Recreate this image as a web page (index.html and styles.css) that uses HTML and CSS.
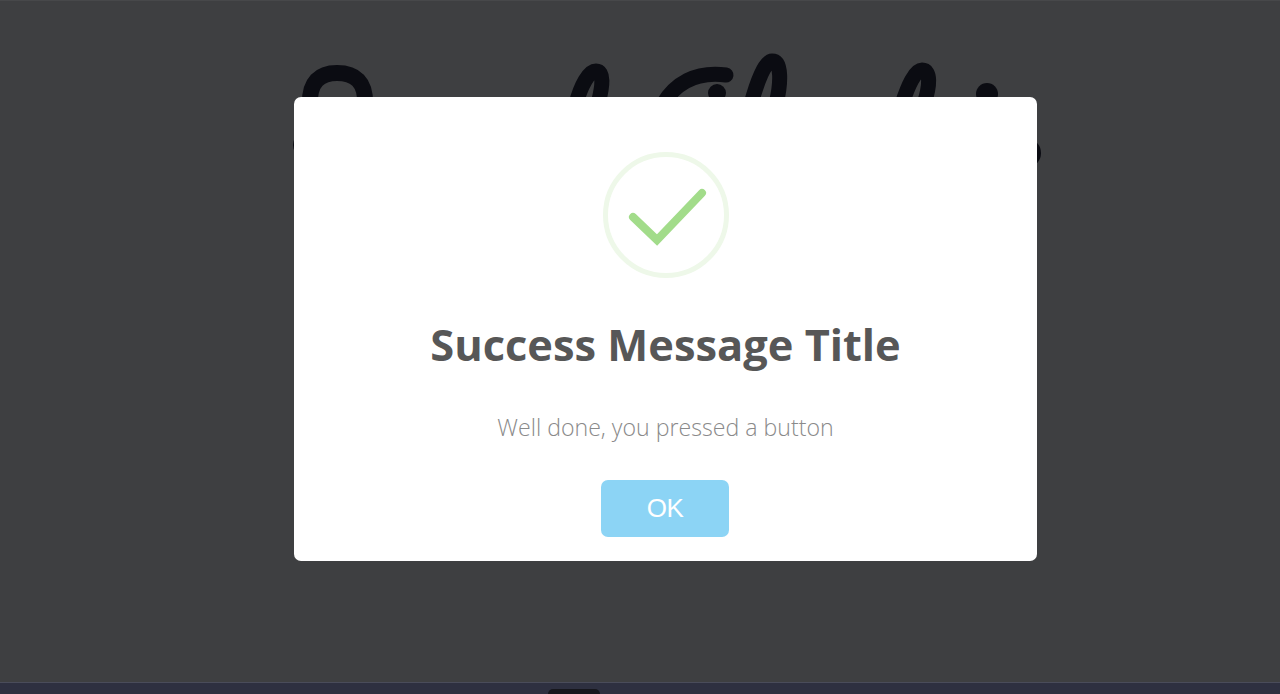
FILE: index.html
```html
<!DOCTYPE html>
<html lang="en">
<head>
<meta charset="utf-8">
<title>Success Message</title>
<link rel="stylesheet" href="styles.css">
</head>
<body>
<main class="stage">
  <!-- Illegible remnants of the page behind the dialog: abstract strokes only -->
  <svg class="backdrop-art" width="1280" height="200" viewBox="0 0 1280 200" aria-hidden="true">
    <g fill="none" stroke="#0b0c12" stroke-linecap="round">
      <path stroke-width="16" d="M310 104C309 82 320 73 337 73C355 73 366 82 365 104"/>
      <path stroke-width="15" d="M576 104C581 85 589 71 596 71C604 71 603 85 598 104"/>
      <path stroke-width="15" d="M663 104C675 84 695 71 726 75"/>
      <path stroke-width="15" d="M751 104C757 82 765 61 772 61C782 61 781 84 776 104"/>
      <path stroke-width="15" d="M902 104C908 86 915 70 922 70C931 70 930 86 924 104"/>
    </g>
    <g fill="#0b0c12">
      <circle cx="717" cy="93" r="9"/>
      <circle cx="987" cy="94" r="11"/>
      <ellipse cx="302" cy="145" rx="9" ry="11"/>
      <ellipse cx="1030" cy="153" rx="11" ry="13"/>
    </g>
  </svg>
  <section class="dialog" role="dialog">
    <svg class="success-icon" width="126" height="126" viewBox="0 0 126 126" aria-hidden="true">
      <circle class="success-ring" cx="63" cy="63" r="60.5"/>
      <path class="success-check" d="M30 65L54 88L99 41"/>
    </svg>
    <h1 class="dialog-title">Success Message Title</h1>
    <p class="dialog-text">Well done, you pressed a button</p>
    <button class="dialog-ok" type="button">OK</button>
  </section>
</main>
<footer class="dock">
  <div class="dock-tab"></div>
</footer>
</body>
</html>
```
FILE: styles.css
```css
* { box-sizing: border-box; }

html, body { height: 100%; }

body {
  margin: 0;
  overflow: hidden;
  display: flex;
  flex-direction: column;
  background: #3e3f41;
  font-family: "Open Sans", sans-serif;
}

.stage {
  position: relative;
  flex: 1;
  display: flex;
  align-items: flex-start;
  padding: 97px 0 0 294px;
  border-top: 1px solid #47484a;
}

.backdrop-art {
  position: absolute;
  left: 0;
  top: -1px;
}

.dialog {
  position: relative;
  width: 743px;
  height: 464px;
  margin-top: -1px;
  padding-top: 55px;
  display: flex;
  flex-direction: column;
  align-items: center;
  background: #fff;
  border-radius: 7px;
}

.success-icon { display: block; flex: none; }

.success-ring {
  fill: none;
  stroke: #eef8e9;
  stroke-width: 5;
}

.success-check {
  fill: none;
  stroke: #a2dc8a;
  stroke-width: 8;
  stroke-linecap: round;
  stroke-linejoin: miter;
}

.dialog-title {
  margin: 35px 0 0;
  font-size: 43.4px;
  line-height: 64px;
  font-weight: 700;
  color: #575757;
}

.dialog-text {
  margin: 34px 0 0;
  font-size: 23.15px;
  line-height: 32px;
  font-weight: 300;
  color: #8a8a8a;
}

.dialog-ok {
  margin: 37px 1px 0 0;
  width: 128px;
  height: 57px;
  padding: 0;
  border: 0;
  border-radius: 7px;
  background: #8cd4f5;
  color: #fff;
  font-family: "Liberation Sans", Arial, sans-serif;
  font-size: 26px;
  letter-spacing: -0.5px;
}

.dock {
  flex: none;
  height: 12px;
  display: flex;
  align-items: flex-end;
  padding-left: 548px;
  background: #2e3040;
  border-top: 1px solid #4a4c5a;
}

.dock-tab {
  width: 52px;
  height: 5px;
  background: #17171d;
  border-radius: 6px 6px 0 0;
}
```
